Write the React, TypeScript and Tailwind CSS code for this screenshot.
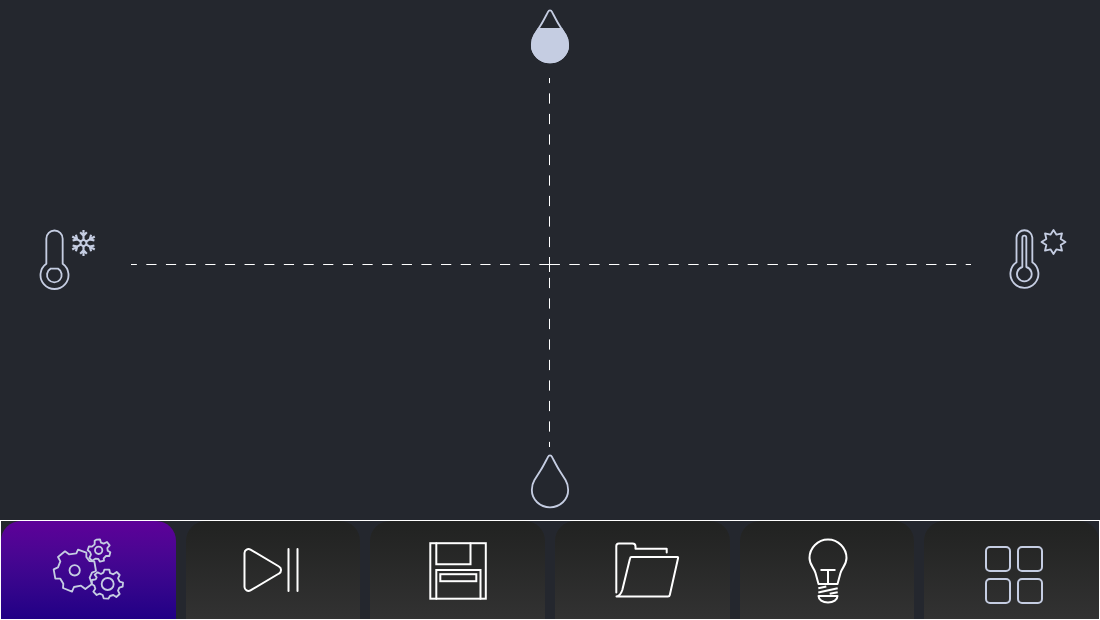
import type { ReactNode } from "react";

const DROP =
  "M144.5 36C146 31 154 31 155.5 36C163 50 171 66 178 77L197 107C203 117 204.5 127 204.5 136A54.5 52 0 0 1 95.5 136C95.5 127 97 117 103 107L122 77C129 66 137 50 144.5 36Z";

const iconStroke = {
  fill: "none",
  stroke: "currentColor",
  strokeLinecap: "round" as const,
  strokeLinejoin: "round" as const,
};

function Drop({ filled, label }: { filled?: boolean; label: string }) {
  return (
    <svg
      role="img"
      aria-label={label}
      viewBox="93 31 120 174"
      className="h-[58px] w-10 overflow-visible text-[#c5cde2]"
      {...iconStroke}
      strokeWidth="5.5"
    >
      {filled && (
        <>
          <clipPath id="drop-level">
            <rect x="80" y="85" width="140" height="120" />
          </clipPath>
          <path d={DROP} fill="currentColor" clipPath="url(#drop-level)" />
        </>
      )}
      <path d={DROP} />
    </svg>
  );
}

function ColdThermometer() {
  return (
    <svg
      role="img"
      aria-label="Colder"
      viewBox="48 45 177 195"
      className="h-[65px] w-[59px] overflow-visible text-[#c5cde2]"
      {...iconStroke}
      strokeWidth="5.5"
    >
      <path d="M79 146V71a24.5 24.5 0 0 1 49 0V146A42 42 0 1 1 79 146Z" />
      <path d="M92 161H114A22 22 0 1 1 92 161Z" />
      {[0, 60, 120, 180, 240, 300].map((angle) => (
        <g key={angle} transform={`rotate(${angle} 190.5 84)`} strokeLinecap="butt" strokeWidth="6.5">
          <path d="M190.5 74V45M180.500 52L190.5 62L200.500 52" />
          <path d="M181.800 79L190.5 74L199.200 79" strokeWidth="5" />
        </g>
      ))}
    </svg>
  );
}

function HotThermometer() {
  return (
    <svg
      role="img"
      aria-label="Warmer"
      viewBox="138 45 177 195"
      className="h-[65px] w-[59px] overflow-visible text-[#c5cde2]"
      {...iconStroke}
      strokeWidth="5.5"
    >
      <path d="M169.500 142V68a23.800 23.800 0 0 1 47.500 0V142A42 42 0 1 1 169.500 142Z" />
      <path d="M187 156V68a6 6 0 0 1 12 0V156A22 22 0 1 1 187 156Z" />
      <path d="M280.500 45L289.500 59L306 55L302 72L316.500 81L302 90L306 107L289.500 103L280.500 117L271.500 103L255 107L259 90L244.500 81L259 72L255 55L271.500 59Z" />
    </svg>
  );
}

function Crosshair() {
  return (
    <svg
      aria-hidden="true"
      viewBox="0 0 840 369"
      className="h-full w-full"
      fill="none"
      stroke="white"
      strokeWidth="1"
    >
      <path d="M418.5 186.5H0" strokeDasharray="10.2 9.45" />
      <path d="M418.5 186.5H840" strokeDasharray="10.4 9.42" />
      <path d="M418.5 0V369" strokeDasharray="10.25 10.25" strokeDashoffset="5.125" />
      <path d="M418.5 179V194" />
    </svg>
  );
}

function TabIcon({ children }: { children: ReactNode }) {
  return (
    <svg
      aria-hidden="true"
      viewBox="0 0 72 72"
      className="size-[72px] overflow-visible"
      {...iconStroke}
      strokeWidth="2"
    >
      {children}
    </svg>
  );
}

function GearsIcon() {
  return (
    <TabIcon>
      <g transform="translate(-52 -19) scale(.33333)" strokeWidth="5.5">
        <path d="M174 126L195 109L207 118L229 115L234 104L259 113L259 126L268 138L283 139L288 168L276 173L269 188L276 207L256 222L243 212L222 216L216 230L189 219L190 206L181 191L166 191L161 163L174 157L181 139Z" />
        <circle cx="224" cy="166" r="15.5" />
        <path d="M289 74L300 73L303 83L311 86L321 81L329 91L322 99L323 107L331 112L328 123L318 123L311 130L312 137L300 140L295 132L286 131L276 137L268 129L273 119L270 111L263 106L267 94L276 95L284 88L284 77Z" />
        <circle cx="296" cy="106" r="11" />
        <path d="M313 164L328 164L330 174L340 178L350 171L359 180L354 190L359 200L369 203L368 215L358 218L354 227L359 237L349 246L340 240L330 243L325 251L311 250L308 240L299 236L290 240L280 230L286 221L283 212L275 207L276 195L287 193L290 187L284 179L293 172L303 177L310 173Z" />
        <circle cx="323" cy="207" r="18" />
      </g>
    </TabIcon>
  );
}

function PlayPauseIcon() {
  return (
    <TabIcon>
      <path d="M7.5 19A4 4 0 0 1 13.5 15.6L42 32.5A4 4 0 0 1 42 39.5L13.5 56.4A4 4 0 0 1 7.5 53Z" />
      <path d="M51.5 15V57M60.5 15V57" />
    </TabIcon>
  );
}

function SaveIcon() {
  return (
    <TabIcon>
      <g strokeLinejoin="miter">
        <rect x="8.3" y="9.2" width="55.5" height="55.5" />
        <path d="M14.3 9.2V30.200H48.500V9.2M14.3 64.700V36H58.500V64.700" />
        <rect x="18.3" y="40.200" width="36" height="7" />
      </g>
    </TabIcon>
  );
}

function FolderIcon() {
  return (
    <TabIcon>
      <path d="M10.3 58.5V12Q10.3 9.5 12.8 9.5H26.5Q29.5 9.5 29.5 12.5V14.8H60.7V18.5" />
      <path d="M25.5 23H71.5Q72.3 23 72.1 24L63.8 61Q63.5 62.5 62 62.5H10.5Q14.5 61.5 16.3 56L24 24.5Q24.3 23 25.5 23Z" />
    </TabIcon>
  );
}

function BulbIcon() {
  return (
    <TabIcon>
      <g strokeLinecap="butt">
        <path d="M27.5 50L24.5 39C23 33.5 18.5 31 18.5 24A18.5 18.5 0 0 1 55.5 24C55.5 31 51 33.5 49.5 39L46.5 50Z" />
        <path d="M29.5 36H44.5M37 36V50" />
        <path d="M27.3 54.3L35.3 52.5M27.3 58.5L46.7 54.2M38.7 59.8L46.7 58.2" />
        <path d="M27.5 62H46.5C46.5 65.5 42.5 68.5 37 68.5S27.5 65.5 27.5 62Z" />
      </g>
    </TabIcon>
  );
}

function GridIcon() {
  return (
    <TabIcon>
      <rect x="10" y="13" width="24" height="24" rx="4" />
      <rect x="42" y="13" width="24" height="24" rx="4" />
      <rect x="10" y="45" width="24" height="24" rx="4" />
      <rect x="42" y="45" width="24" height="24" rx="4" />
    </TabIcon>
  );
}

const tabs = [
  { label: "Adjust", icon: <GearsIcon />, active: true, tint: "text-[#c5cde2]" },
  { label: "Play or pause", icon: <PlayPauseIcon />, active: false, tint: "text-white" },
  { label: "Save", icon: <SaveIcon />, active: false, tint: "text-white" },
  { label: "Open", icon: <FolderIcon />, active: false, tint: "text-white" },
  { label: "Light", icon: <BulbIcon />, active: false, tint: "text-white" },
  { label: "Menu", icon: <GridIcon />, active: false, tint: "text-[#c5cde2]" },
];

export default function App() {
  return (
    <div className="flex h-screen flex-col bg-[#24272e] font-['Liberation_Sans',sans-serif]">
      <main className="grid min-h-0 flex-1 grid-cols-[131px_minmax(0,1fr)_129px] grid-rows-[78px_minmax(0,1fr)_73px] place-items-center">
        <div className="col-start-2">
          <Drop filled label="More humid" />
        </div>
        <div className="col-start-1 row-start-2">
          <ColdThermometer />
        </div>
        <div className="col-start-2 row-start-2 h-full w-full">
          <Crosshair />
        </div>
        <div className="col-start-3 row-start-2">
          <HotThermometer />
        </div>
        <div className="col-start-2 row-start-3">
          <Drop label="Less humid" />
        </div>
      </main>
      <nav className="grid h-[100px] grid-cols-6 gap-[10px] border border-white">
        {tabs.map((tab) => (
          <button
            key={tab.label}
            type="button"
            aria-label={tab.label}
            aria-pressed={tab.active}
            className={`flex items-center justify-center rounded-t-[20px] bg-linear-to-b ${tab.tint} ${
              tab.active ? "from-[#5e0099] to-[#200085]" : "from-[#212221] to-[#323232]"
            }`}
          >
            {tab.icon}
          </button>
        ))}
      </nav>
    </div>
  );
}
